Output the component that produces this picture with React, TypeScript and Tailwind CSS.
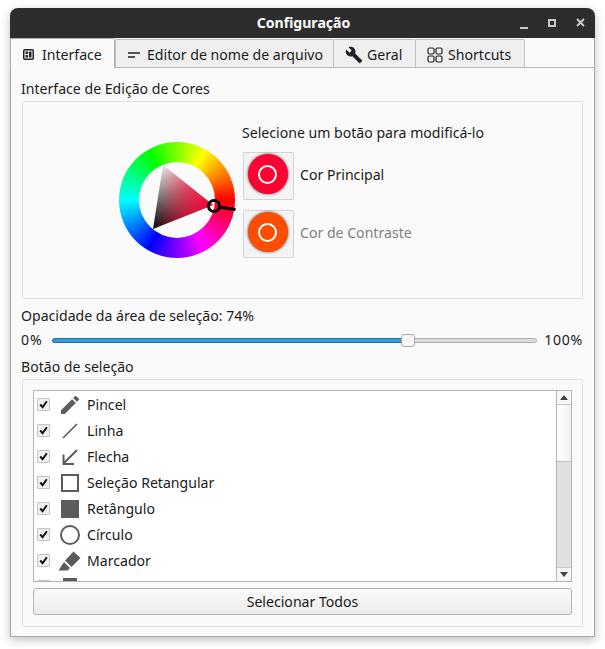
import { MdBuild, MdEdit } from "react-icons/md";

const font = { fontFamily: '"Noto Sans", sans-serif' };

function Tab({ children, width }: { children: React.ReactNode; width: string }) {
  return (
    <div className={`${width} -ml-px flex h-[28px] items-center rounded-t-[2px] border border-b-0 border-[#c0c0c0] bg-[#efefef] pt-[2px]`}>
      {children}
    </div>
  );
}

function ColorWheel() {
  return (
    <div className="relative h-[116px] w-[116px] rounded-full bg-[conic-gradient(from_90deg,#ff0000,#ff00ff,#0000ff,#00ffff,#00ff00,#ffff00,#ff0000)]">
      <div className="absolute top-[20px] left-[20px] h-[76px] w-[76px] rounded-full bg-[#fafafa]" />
      <svg className="absolute top-0 left-0 overflow-visible" width="116" height="116" viewBox="0 0 116 116">
        <defs>
          <linearGradient id="bw" gradientUnits="userSpaceOnUse" x1="44" y1="23" x2="34" y2="87">
            <stop offset="0" stopColor="#f0f0f0" />
            <stop offset="1" stopColor="#000000" />
          </linearGradient>
          <linearGradient id="red" gradientUnits="userSpaceOnUse" x1="94" y1="63" x2="39" y2="55">
            <stop offset="0" stopColor="#ff0033" />
            <stop offset="0.5" stopColor="#ff0033" stopOpacity="0.6" />
            <stop offset="1" stopColor="#ff0033" stopOpacity="0" />
          </linearGradient>
        </defs>
        <polygon points="44,23 34,87 94,63" fill="url(#bw)" />
        <polygon points="44,23 34,87 94,63" fill="url(#red)" />
        <circle cx="95" cy="64" r="5.5" fill="none" stroke="#000" strokeWidth="3" />
        <line x1="100" y1="65" x2="116.5" y2="67.5" stroke="#000" strokeWidth="3" />
      </svg>
    </div>
  );
}

function Swatch({ color, label, muted }: { color: string; label: string; muted?: boolean }) {
  return (
    <div className="flex items-center">
      <div className="ml-px flex h-[48px] w-[51px] items-center justify-center rounded-[2px] border border-[#d4d4d4] bg-[#f4f4f4] pr-[2px] pb-[4px]">
        <div className={`${color} flex h-[40px] w-[40px] items-center justify-center rounded-full shadow-[0_0_3px_#444]`}>
          <div className="h-[19px] w-[19px] rounded-full border-2 border-white" />
        </div>
      </div>
      <span className={`mb-[2px] ml-[6px] ${muted ? "text-[#808080]" : "text-[#1a1a1a]"}`}>{label}</span>
    </div>
  );
}

const tools = [
  {
    name: "Pincel",
    icon: <MdEdit className="h-[24px] w-[24px] text-[#5c5c5c]" />,
  },
  {
    name: "Linha",
    icon: (
      <svg width="20" height="20" viewBox="0 0 20 20">
        <line x1="3" y1="17" x2="17" y2="3" stroke="#5c5c5c" strokeWidth="1.6" />
      </svg>
    ),
  },
  {
    name: "Flecha",
    icon: (
      <svg width="20" height="20" viewBox="0 0 20 20">
        <path d="M17 3 L4 16 M3.5 7.5 V17 H14" fill="none" stroke="#5c5c5c" strokeWidth="2" />
      </svg>
    ),
  },
  {
    name: "Seleção Retangular",
    icon: <div className="h-[18px] w-[18px] border-2 border-[#5c5c5c]" />,
  },
  {
    name: "Retângulo",
    icon: <div className="h-[18px] w-[18px] bg-[#5c5c5c]" />,
  },
  {
    name: "Círculo",
    icon: <div className="h-[20px] w-[20px] rounded-full border-2 border-[#5c5c5c]" />,
  },
  {
    name: "Marcador",
    icon: (
      <svg width="24" height="24" viewBox="0 0 24 24">
        <path d="M15.5 2.5 L22.5 9 L13.5 18 L7 11.5 Z M6 13 L12 19 L9.5 21.5 H0.5 L4 16 Z" fill="#5c5c5c" />
      </svg>
    ),
  },
  {
    name: "",
    icon: <div className="h-[18px] w-[14px] bg-[#5c5c5c]" />,
  },
];

function ToolRow({ name, icon }: { name: string; icon: React.ReactNode }) {
  return (
    <div className="flex h-[26px] shrink-0 items-center">
      <div className="mb-px ml-[3px] flex h-[13px] w-[13px] items-center justify-center rounded-[1px] border border-[#c4c4c4] bg-[#f0f0f0]">
        <svg width="9" height="9" viewBox="0 0 9 9">
          <path d="M1.2 4.5 L3.6 7.2 L7.8 1.2" fill="none" stroke="#111" strokeWidth="2" />
        </svg>
      </div>
      <div className="ml-[8px] flex w-[24px] items-center justify-center">{icon}</div>
      {name && <span className="ml-[5px] text-[#1a1a1a]">{name}</span>}
    </div>
  );
}

export default function App() {
  return (
    <div className="h-[649px] w-[605px] overflow-hidden bg-white pt-[8px] pl-[10px] text-[14.1px] leading-[20px] text-[#1a1a1a]" style={font}>
      <div className="flex h-[629px] w-[585px] flex-col rounded-t-[8px] shadow-[0_3px_10px_rgba(0,0,0,0.25)]">
        <header className="relative flex h-[30px] shrink-0 items-center justify-center rounded-t-[8px] bg-[#2d2d2d] font-bold text-white">
          <span className="ml-[2px]">Configuração</span>
          <div className="absolute top-0 right-0 flex h-full items-center pb-[1px]">
            <div className="mt-[10px] mr-[20px] h-[2px] w-[8px] bg-[#c8c8c8]" />
            <div className="mr-[20px] h-[8px] w-[8px] border-2 border-[#c8c8c8]" />
            <svg className="mr-[10px]" width="9" height="9" viewBox="0 0 9 9">
              <path d="M1 1 L8 8 M8 1 L1 8" stroke="#c8c8c8" strokeWidth="2" />
            </svg>
          </div>
        </header>

        <div className="flex flex-1 flex-col border-x border-b border-[#a8a8a8] bg-[#fafafa]">
          <div className="relative z-10 -mx-px flex h-[30px] shrink-0 items-end border-b border-[#b8b8b8]">
            <div className="-mb-px flex h-[30px] w-[105px] items-center gap-[8px] rounded-t-[2px] border border-b-0 border-[#b0b0b0] bg-[#fafafa] pt-[2px] pl-[12px]">
              <svg width="11" height="11" viewBox="0 0 11 11">
                <rect x="0.75" y="0.75" width="9.5" height="9.5" rx="1" fill="none" stroke="#222" strokeWidth="1.5" />
                <rect x="2.5" y="2.5" width="2.5" height="2.5" fill="#222" />
                <rect x="2.5" y="6" width="2.5" height="2.5" fill="#222" />
                <rect x="6" y="2.5" width="2.5" height="6" fill="#222" />
              </svg>
              Interface
            </div>
            <Tab width="ml-0 w-[219px] pl-[12px] gap-[7px]">
              <svg width="12" height="6" viewBox="0 0 12 6">
                <path d="M0 1 H12 M0 5 H7" stroke="#222" strokeWidth="1.4" />
              </svg>
              Editor de nome de arquivo
            </Tab>
            <Tab width="w-[83px] pl-[11px] gap-[4px]">
              <MdBuild className="h-[18px] w-[18px] text-[#222]" />
              Geral
            </Tab>
            <Tab width="w-[110px] pl-[11px] gap-[5px]">
              <svg width="16" height="16" viewBox="0 0 16 16" fill="none" stroke="#222" strokeWidth="1.2">
                <rect x="1" y="1" width="6" height="6" rx="1.5" />
                <rect x="9" y="1" width="6" height="6" rx="1.5" />
                <rect x="1" y="9" width="6" height="6" rx="1.5" />
                <rect x="9" y="9" width="6" height="6" rx="1.5" />
              </svg>
              Shortcuts
            </Tab>
          </div>

          <div className="flex flex-1 flex-col px-[11px]">
            <div className="mt-[11px] -ml-px h-[20px]">Interface de Edição de Cores</div>
            <div className="mt-[2px] flex h-[198px] items-start rounded-[2px] border border-[#e2e2e2] bg-[#fafafa]">
              <div className="mt-[40px] ml-[96px]">
                <ColorWheel />
              </div>
              <div className="mt-[21px] ml-[7px] flex flex-col">
                <div className="h-[20px]">Selecione um botão para modificá-lo</div>
                <div className="mt-[9px] flex flex-col gap-[10px]">
                  <Swatch color="bg-[#ff0033]" label="Cor Principal" />
                  <Swatch color="bg-[#ff4d00]" label="Cor de Contraste" muted />
                </div>
              </div>
            </div>

            <div className="mt-[7px] -ml-px h-[20px]">Opacidade da área de seleção: 74%</div>
            <div className="mt-[4px] -ml-px flex h-[20px] items-center">
              <span className="w-[31px] tracking-[1px]">0%</span>
              <div className="relative h-[5px] w-[485px] rounded-full border border-[#b0b0b0] bg-[#dcdcdc]">
                <div className="-m-px h-[5px] w-[356px] rounded-full border border-[#1d6fa8] bg-[#3a9ad9]" />
                <div className="absolute top-[-5px] left-[348px] h-[13px] w-[14px] rounded-[3px] border border-[#a8a8a8] bg-[#f6f6f6]" />
              </div>
              <span className="ml-auto tracking-[0.7px]">100%</span>
            </div>

            <div className="mt-[7px] -ml-px h-[20px]">Botão de seleção</div>
            <div className="mt-[2px] flex h-[248px] flex-col rounded-[2px] border border-[#e2e2e2] px-[10px] pt-[10px]">
              <div className="flex h-[192px] overflow-hidden border border-[#b4b4b4] bg-white">
                <div className="flex flex-1 flex-col overflow-hidden pt-px">
                  {tools.map((t, i) => (
                    <ToolRow key={i} name={t.name} icon={t.icon} />
                  ))}
                </div>
                <div className="flex w-[15px] flex-col border-l border-[#b4b4b4]">
                  <div className="flex h-[14px] shrink-0 items-center justify-center border-b border-[#c8c8c8] bg-[#f6f6f6]">
                    <div className="h-0 w-0 border-x-[4px] border-b-[5px] border-x-transparent border-b-[#444]" />
                  </div>
                  <div className="h-[56px] shrink-0 bg-gradient-to-r from-[#ffffff] to-[#f0f0f0]" />
                  <div className="flex-1 border-t border-[#c0c0c0] bg-[#e0e0e0]" />
                  <div className="flex h-[14px] shrink-0 items-center justify-center border-t border-[#c8c8c8] bg-[#f6f6f6]">
                    <div className="h-0 w-0 border-x-[4px] border-t-[5px] border-x-transparent border-t-[#444]" />
                  </div>
                </div>
              </div>
              <div className="mt-[6px] flex h-[27px] items-center justify-center rounded-[3px] border border-[#b4b4b4] bg-gradient-to-b from-[#fafafa] to-[#ececec]">
                Selecionar Todos
              </div>
            </div>
          </div>
        </div>
      </div>
    </div>
  );
}
